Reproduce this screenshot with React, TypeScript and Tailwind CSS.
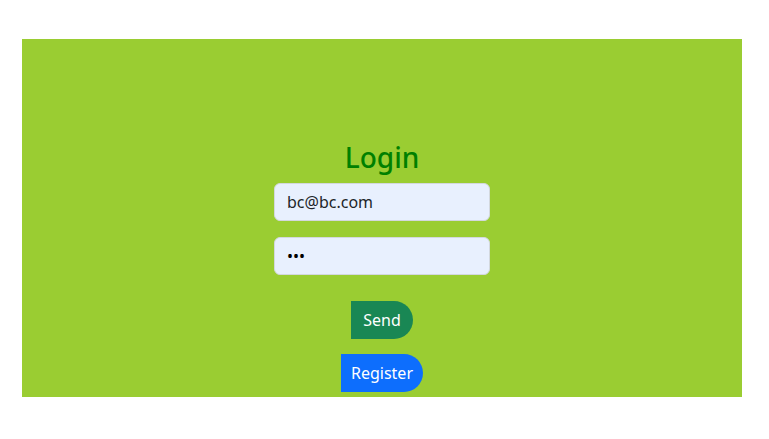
import { useState } from 'react';

export default function App() {
  const [email, setEmail] = useState('bc@bc.com');
  const [password, setPassword] = useState('abc');

  return (
    <div className="min-h-[439px] w-[769px] bg-white pt-[39px] pl-[22px] font-['Noto_Sans',sans-serif]">
      <div className="flex h-[358px] w-[720px] flex-col items-center bg-[#9acd32] pt-[102px]">
        <h2 className="mb-2 text-[28px] font-medium leading-[1.2] text-[#008000]">Login</h2>
        <form className="flex flex-col items-center" onSubmit={e => e.preventDefault()}>
          <input
            type="email"
            value={email}
            onChange={e => setEmail(e.target.value)}
            className="h-[38px] w-[216px] rounded-[6px] border border-[#d3d8de] bg-[#e8f0fe] px-3 text-base text-[#212529] outline-none"
          />
          <input
            type="password"
            value={password}
            onChange={e => setPassword(e.target.value)}
            className="mt-4 h-[38px] w-[216px] rounded-[6px] border border-[#d3d8de] bg-[#e8f0fe] px-3 text-base text-black outline-none"
          />
          <button type="submit" className="mt-[26px] h-[38px] rounded-l-[6px] rounded-r-full bg-[#198754] px-3 text-base text-white">
            Send
          </button>
        </form>
        <button className="mt-[15px] h-[38px] rounded-l-[6px] rounded-r-full bg-[#0d6efd] px-[10px] text-base text-white">
          Register
        </button>
      </div>
    </div>
  );
}
